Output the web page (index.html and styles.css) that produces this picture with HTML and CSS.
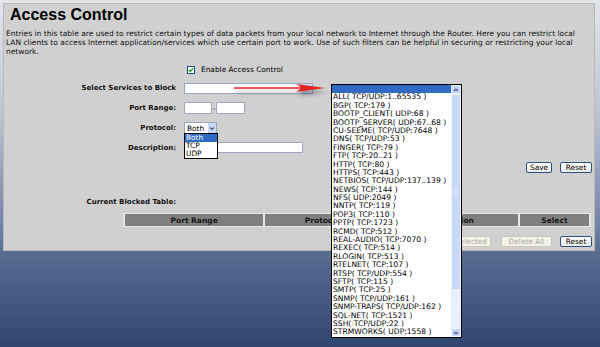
FILE: index.html
```html
<!DOCTYPE html>
<html lang="en">
<head>
    <meta charset="UTF-8">
    <meta name="viewport" content="width=device-width, initial-scale=1.0">
    <title>Access Control</title>
    <link rel="stylesheet" href="styles.css">
</head>
<body>
    <div class="page">
        <h1 class="page-title">Access Control</h1>
        <p class="intro">Entries in this table are used to restrict certain types of data packets from your local network to Internet through the Router. Here you can restrict local LAN clients to access Internet application/services which use certain port to work. Use of such filters can be helpful in securing or restricting your local network.</p>

        <div class="form-grid">
            <div></div>
            <div class="check-row">
                <span class="checkbox">
                    <svg width="6" height="6" viewBox="0 0 6 6"><path d="M0.8 2.8 L2.3 4.4 L5.2 1.2" fill="none" stroke="#21a121" stroke-width="1.4"/></svg>
                </span>
                <span>Enable Access Control</span>
            </div>

            <div class="label">Select Services to Block</div>
            <div><div class="combo combo-wide"><span class="combo-btn"></span></div></div>

            <div class="label">Port Range:</div>
            <div class="port-range">
                <input type="text" class="text-input port-from">
                <span class="dash">-</span>
                <input type="text" class="text-input port-to">
            </div>

            <div class="label">Protocol:</div>
            <div>
                <div class="combo combo-small">
                    <span class="combo-value">Both</span>
                    <span class="combo-btn">
                        <svg width="8" height="9" viewBox="0 0 8 9"><path d="M2 3.5 L4 5.5 L6 3.5" fill="none" stroke="#4d6185" stroke-width="1.2"/></svg>
                    </span>
                    <div class="drop-list">
                        <div class="drop-item selected">Both</div>
                        <div class="drop-item">TCP</div>
                        <div class="drop-item">UDP</div>
                    </div>
                </div>
            </div>

            <div class="label">Description:</div>
            <div><input type="text" class="text-input desc-input"></div>
        </div>

        <div class="btn-row save-row">
            <button class="btn btn-save">Save</button>
            <button class="btn btn-reset">Reset</button>
        </div>

        <div class="form-grid table-caption">
            <div class="label">Current Blocked Table:</div>
        </div>

        <table class="blocked-table">
            <tr>
                <th class="col-port">Port Range</th>
                <th class="col-proto">Protocol</th>
                <th class="col-desc">Description</th>
                <th class="col-select">Select</th>
            </tr>
        </table>

        <div class="btn-row bottom-row">
            <button class="btn btn-delete-sel" disabled>Delete Selected</button>
            <button class="btn btn-delete-all" disabled>Delete All</button>
            <button class="btn btn-reset">Reset</button>
        </div>
    </div>

    <!-- pointer arrow laid over the form -->
    <svg class="pointer-arrow" width="100" height="26" viewBox="0 0 100 26">
        <defs>
            <filter id="arrowShadow" x="-20%" y="-50%" width="140%" height="250%">
                <feDropShadow dx="2" dy="4" stdDeviation="2" flood-color="#000" flood-opacity="0.35"/>
            </filter>
        </defs>
        <g filter="url(#arrowShadow)">
            <line x1="4" y1="10" x2="72" y2="10" stroke="#e5231b" stroke-width="1.6"/>
            <path d="M66 6 L95 10 L66 14 L72 10 Z" fill="#e5231b"/>
        </g>
    </svg>

    <!-- services dropdown, opened -->
    <div class="service-list">
        <div class="service-items">
            <div class="opt selected">&nbsp;</div>
            <div class="opt">ALL( TCP/UDP:1..65535 )</div>
            <div class="opt">BGP( TCP:179 )</div>
            <div class="opt">BOOTP_CLIENT( UDP:68 )</div>
            <div class="opt">BOOTP_SERVER( UDP:67..68 )</div>
            <div class="opt">CU-SEEME( TCP/UDP:7648 )</div>
            <div class="opt">DNS( TCP/UDP:53 )</div>
            <div class="opt">FINGER( TCP:79 )</div>
            <div class="opt">FTP( TCP:20..21 )</div>
            <div class="opt">HTTP( TCP:80 )</div>
            <div class="opt">HTTPS( TCP:443 )</div>
            <div class="opt">NETBIOS( TCP/UDP:137..139 )</div>
            <div class="opt">NEWS( TCP:144 )</div>
            <div class="opt">NFS( UDP:2049 )</div>
            <div class="opt">NNTP( TCP:119 )</div>
            <div class="opt">POP3( TCP:110 )</div>
            <div class="opt">PPTP( TCP:1723 )</div>
            <div class="opt">RCMD( TCP:512 )</div>
            <div class="opt">REAL-AUDIO( TCP:7070 )</div>
            <div class="opt">REXEC( TCP:514 )</div>
            <div class="opt">RLOGIN( TCP:513 )</div>
            <div class="opt">RTELNET( TCP:107 )</div>
            <div class="opt">RTSP( TCP/UDP:554 )</div>
            <div class="opt">SFTP( TCP:115 )</div>
            <div class="opt">SMTP( TCP:25 )</div>
            <div class="opt">SNMP( TCP/UDP:161 )</div>
            <div class="opt">SNMP-TRAPS( TCP/UDP:162 )</div>
            <div class="opt">SQL-NET( TCP:1521 )</div>
            <div class="opt">SSH( TCP/UDP:22 )</div>
            <div class="opt">STRMWORKS( UDP:1558 )</div>
        </div>
        <div class="scrollbar">
            <div class="scroll-btn">
                <svg width="8" height="8" viewBox="0 0 8 8"><path d="M2 5 L4 3 L6 5" fill="none" stroke="#4d6185" stroke-width="1.2"/></svg>
            </div>
            <div class="scroll-thumb"><span class="grip"></span></div>
            <div class="scroll-track"></div>
            <div class="scroll-btn">
                <svg width="8" height="8" viewBox="0 0 8 8"><path d="M2 3 L4 5 L6 3" fill="none" stroke="#4d6185" stroke-width="1.2"/></svg>
            </div>
        </div>
    </div>
</body>
</html>
```

FILE: styles.css
```css
* {
    box-sizing: border-box;
    margin: 0;
    padding: 0;
}

html, body {
    height: 100%;
}

body {
    position: relative;
    overflow: hidden;
    font-family: "DejaVu Sans", Verdana, sans-serif;
    font-size: 7.4px;
    color: #000;
    background: linear-gradient(to bottom, #e3e6eb 0, #b9c2d1 120px, #7383a5 225px, #5a6c92 252px, #30466f 347px);
}

.page {
    margin: 3px 5px 0 3px;
    height: 248px;
    padding: 0 2px;
    background: #d0d0d0;
    border: 1px solid #b9b9b9;
}

.page-title {
    margin: 2px 0 0 4px;
    font-family: "Liberation Sans", Arial, sans-serif;
    font-size: 16px;
    line-height: 18px;
    font-weight: bold;
    color: #000;
}

.intro {
    margin-top: 6px;
    font-size: 7.5px;
    line-height: 8.8px;
    color: #111;
}

.form-grid {
    display: grid;
    grid-template-columns: 170px 1fr;
    grid-template-rows: 17px repeat(4, 20px);
    column-gap: 8px;
    align-items: center;
    margin-top: 5px;
}

.label {
    text-align: right;
    font-size: 7px;
    font-weight: bold;
    color: #111;
}

.check-row {
    display: flex;
    align-items: center;
    gap: 6px;
    padding-left: 3px;
}

.checkbox {
    display: flex;
    align-items: center;
    justify-content: center;
    width: 8px;
    height: 8px;
    background: #fff;
    border: 1px solid #1c5180;
}

.combo {
    position: relative;
    display: flex;
    align-items: center;
    height: 11px;
    background: #fff;
    border: 1px solid #9aa6ba;
}

.combo-wide {
    width: 129px;
}

.combo-small {
    width: 33px;
    height: 12px;
}

.combo-value {
    padding-left: 2px;
}

.combo-btn {
    display: flex;
    align-items: center;
    justify-content: center;
    margin-left: auto;
    width: 12px;
    height: 100%;
    background: #c9d6f2;
}

.combo-small .combo-btn {
    width: 8px;
}

.drop-list {
    position: absolute;
    left: -1px;
    top: 10px;
    width: 34px;
    background: #fff;
    border: 1px solid #000;
}

.drop-item {
    height: 8px;
    line-height: 8px;
    padding-left: 1px;
}

.drop-item.selected,
.opt.selected {
    background: #316ac5;
    color: #fff;
}

.port-range {
    display: flex;
    align-items: center;
}

.text-input {
    height: 12px;
    background: #fff;
    border: 1px solid #9aa6ba;
}

.port-from {
    width: 28px;
}

.port-to {
    width: 29px;
}

.dash {
    width: 4px;
    text-align: center;
}

.desc-input {
    width: 119px;
    height: 11px;
}

.btn-row {
    display: flex;
    justify-content: flex-end;
    gap: 8px;
}

.save-row {
    margin-top: 4px;
}

.btn {
    height: 11px;
    padding: 0 3px;
    font-family: "DejaVu Sans", Verdana, sans-serif;
    font-size: 7.4px;
    line-height: 1;
    color: #000;
    background: linear-gradient(#ffffff, #ecebe5);
    border: 1px solid #2c4f86;
    border-radius: 2px;
}

.btn:disabled {
    color: #aca899;
    background: #f2f1ea;
    border-color: #c9c7ba;
}

.btn-save { width: 26px; }
.btn-reset { width: 32px; }
.btn-delete-all { width: 51px; }
.btn-delete-sel {
    width: 67px;
    margin-right: 2px;
}

.table-caption {
    grid-template-rows: 10px;
    margin-top: 24px;
}

.blocked-table {
    width: 468px;
    margin: 6px 0 0 117px;
    border-spacing: 2px 1px;
    background: #e6e6e6;
}

.blocked-table th {
    height: 12px;
    padding: 0;
    font-size: 7.5px;
    font-weight: bold;
    color: #161616;
    background: #808080;
}

.col-port { width: 138px; }
.col-proto { width: 114px; }
.col-desc { width: 136px; }
.col-select { width: 69px; }

.bottom-row {
    margin-top: 9px;
}

.pointer-arrow {
    position: absolute;
    left: 230px;
    top: 78px;
}

.service-list {
    position: absolute;
    left: 331px;
    top: 84px;
    display: flex;
    width: 131px;
    height: 254px;
    background: #fff;
    border: 1px solid #000;
}

.service-items {
    flex: 1;
}

.opt {
    height: 8.4px;
    line-height: 8.4px;
    padding-left: 1px;
    font-size: 7.6px;
    white-space: nowrap;
}

.scrollbar {
    display: flex;
    flex-direction: column;
    width: 10px;
    background: #e9eefb;
}

.scroll-btn {
    display: flex;
    align-items: center;
    justify-content: center;
    height: 9px;
    background: #c5d5fb;
    border: 1px solid #eef3ff;
    border-radius: 1px;
}

.scroll-thumb {
    display: flex;
    align-items: center;
    justify-content: center;
    height: 196px;
    background: #c9d8fb;
    border: 1px solid #eef3ff;
}

.grip {
    width: 4px;
    height: 4px;
    border-top: 1px solid #eef3ff;
    border-bottom: 1px solid #eef3ff;
}

.scroll-track {
    flex: 1;
}
```
